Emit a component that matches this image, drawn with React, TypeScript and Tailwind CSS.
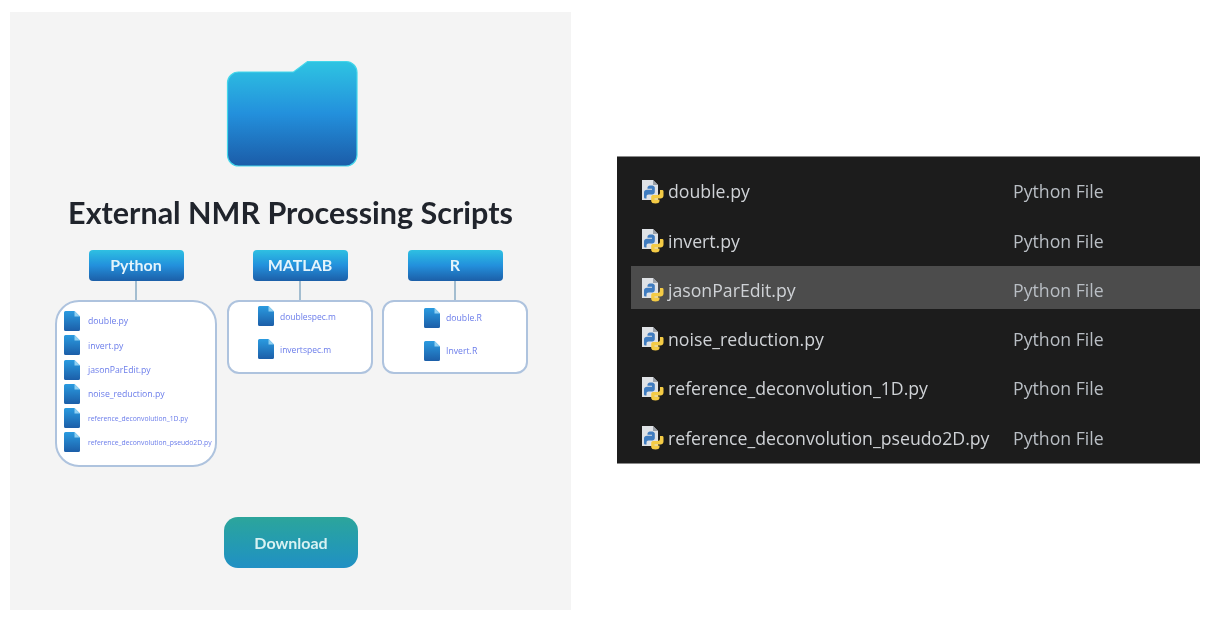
import React from "react";

const heading = { fontFamily: '"Lato", "Open Sans", sans-serif' };
const listFont = { fontFamily: '"Open Sans", "Noto Sans", sans-serif' };

function SmallFile({ id }: { id: string }) {
  return (
    <svg width="16" height="20" viewBox="0 0 16 20" className="shrink-0">
      <defs>
        <linearGradient id={id} x1="0" y1="0" x2="0" y2="1">
          <stop offset="0" stopColor="#2a9be0" />
          <stop offset="1" stopColor="#1c5ea8" />
        </linearGradient>
      </defs>
      <path d="M1.5 0H10.5L16 5.5V18.5A1.5 1.5 0 0 1 14.5 20H1.5A1.5 1.5 0 0 1 0 18.5V1.5A1.5 1.5 0 0 1 1.5 0Z" fill={`url(#${id})`} />
      <path d="M10.5 0V5.5H16Z" fill="#8fd0f2" />
    </svg>
  );
}

function FileLine({ id, name, size, gap = "gap-[9px]" }: { id: string; name: string; size: string; gap?: string }) {
  return (
    <div className={`flex items-center ${gap}`}>
      <SmallFile id={id} />
      <span className={`whitespace-nowrap pt-[2px] text-[#6a7cea] ${size}`} style={listFont}>{name}</span>
    </div>
  );
}

function Pill({ label }: { label: string }) {
  return (
    <div className="flex flex-col items-center">
      <div
        className="flex h-[31px] w-[95px] items-center justify-center rounded-[4px] bg-gradient-to-b from-[#2fc0e2] via-[#2390dc] to-[#1c5fa8] pb-[2px] text-[16px] font-bold text-[#e4f4fb]"
        style={heading}
      >
        {label}
      </div>
      <div className="h-[19px] w-[2px] bg-[#a3bdd0]" />
    </div>
  );
}

function PythonIcon() {
  return (
    <svg width="24" height="24" viewBox="0 0 24 24" className="shrink-0">
      <path d="M1 0H12L17 5V20H1Z" fill="#dfe2e6" />
      <path d="M12 0V5H17Z" fill="#9aa0a8" />
      <path d="M3 17V12.5C3 10.8 4.2 9.8 6 9.8H11V8.8H6.5V7.5C6.5 6 8 5.4 10 5.4C12 5.4 13.8 6 13.8 7.5V12C13.8 13.5 12.7 14.5 11.2 14.5H7.5C6.3 14.5 5.5 15.3 5.5 16.5V18.5H4.5C3.6 18.5 3 18 3 17Z" fill="#3f7cc0" />
      <path d="M22.5 11.5V15.5C22.5 17.4 21.2 18.5 19.5 18.5H13.5V19.5H18.5V21C18.5 22.7 16.8 23.5 14.5 23.5C12 23.5 10.2 22.7 10.2 21V17C10.2 15.6 11.4 15 12.8 15H16.5C18 15 19 14 19 12.7V10H21C22 10 22.5 10.5 22.5 11.5Z" fill="#f4cb45" />
    </svg>
  );
}

const rows = [
  "double.py",
  "invert.py",
  "jasonParEdit.py",
  "noise_reduction.py",
  "reference_deconvolution_1D.py",
  "reference_deconvolution_pseudo2D.py",
];

export default function App() {
  return (
    <div className="flex h-[620px] w-[1212px] items-start gap-[46px] bg-white pl-[10px] pt-[12px]">
      <section className="flex h-[598px] w-[561px] shrink-0 flex-col items-center bg-[#f4f4f4] blur-[0.6px]">
        <svg width="132" height="107" viewBox="0 0 132 107" className="ml-[2px] mt-[48px] shrink-0">
          <defs>
            <linearGradient id="folder" x1="0" y1="0" x2="0" y2="1">
              <stop offset="0" stopColor="#2ec4e2" />
              <stop offset="0.5" stopColor="#2390dc" />
              <stop offset="1" stopColor="#1b5ca8" />
            </linearGradient>
          </defs>
          <path
            d="M12.5 12H67.5L81.5 1.5H120A11 11 0 0 1 131 12.5V95A11 11 0 0 1 120 106H12.5A11 11 0 0 1 1.5 95V23A11 11 0 0 1 12.5 12Z"
            fill="url(#folder)"
            stroke="#44d6ea"
            strokeWidth="1.2"
          />
        </svg>
        <h1 className="mt-[26px] text-[30.5px] leading-[38px] font-bold whitespace-nowrap text-[#20242c]" style={heading}>
          External NMR Processing Scripts
        </h1>

        <div className="mt-[19px] flex w-full items-start pl-[45px]">
          <div className="flex w-[162px] flex-col items-center">
            <Pill label="Python" />
            <div className="flex h-[167px] w-full flex-col gap-[4.3px] rounded-[24px] border-2 border-[#aec3de] bg-white pl-[7px] pt-[9px]">
              <FileLine id="p1" name="double.py" size="text-[8.7px]" gap="gap-[8px]" />
              <FileLine id="p2" name="invert.py" size="text-[8.7px]" gap="gap-[8px]" />
              <FileLine id="p3" name="jasonParEdit.py" size="text-[8.7px]" gap="gap-[8px]" />
              <FileLine id="p4" name="noise_reduction.py" size="text-[8.7px]" gap="gap-[8px]" />
              <FileLine id="p5" name="reference_deconvolution_1D.py" size="text-[6.8px]" gap="gap-[8px]" />
              <FileLine id="p6" name="reference_deconvolution_pseudo2D.py" size="text-[6.8px]" gap="gap-[8px]" />
            </div>
          </div>
          <div className="ml-[10px] flex w-[146px] flex-col items-center">
            <Pill label="MATLAB" />
            <div className="flex h-[74px] w-full flex-col gap-[13px] rounded-[12px] border-2 border-[#aec3de] bg-white pl-[29px] pt-[4px]">
              <FileLine id="m1" name="doublespec.m" size="text-[8.5px]" gap="gap-[6px]" />
              <FileLine id="m2" name="invertspec.m" size="text-[8.5px]" gap="gap-[6px]" />
            </div>
          </div>
          <div className="ml-[9px] flex w-[146px] flex-col items-center">
            <Pill label="R" />
            <div className="flex h-[74px] w-full flex-col gap-[13px] rounded-[12px] border-2 border-[#aec3de] bg-white pl-[40px] pt-[6px]">
              <FileLine id="r1" name="double.R" size="text-[8.7px]" gap="gap-[6px]" />
              <FileLine id="r2" name="Invert.R" size="text-[8.7px]" gap="gap-[6px]" />
            </div>
          </div>
        </div>

        <button
          className="ml-[1px] mt-[50px] flex h-[51px] w-[134px] items-center justify-center rounded-[14px] bg-gradient-to-b from-[#2ca59b] to-[#2190c4] text-[16px] font-bold text-[#d8f2f2]"
          style={heading}
        >
          Download
        </button>
      </section>

      <section
        className="mt-[144px] flex h-[308px] w-[583px] shrink-0 flex-col gap-[6.3px] border-t border-b border-[#8a8a8a] bg-[#1c1c1c] pl-[14px] pt-[10px] blur-[0.5px]"
        style={listFont}
      >
        {rows.map((name) => (
          <div
            key={name}
            className={`flex h-[43px] shrink-0 items-center pl-[10px] pt-[6px] text-[17.7px] text-[#cfd2d6] ${name === "jasonParEdit.py" ? "bg-[#4c4c4c]" : ""}`}
          >
            <PythonIcon />
            <span className="ml-[3px] w-[345px] whitespace-nowrap">{name}</span>
            <span className="whitespace-nowrap text-[#b9bec4]">Python File</span>
          </div>
        ))}
      </section>
    </div>
  );
}
